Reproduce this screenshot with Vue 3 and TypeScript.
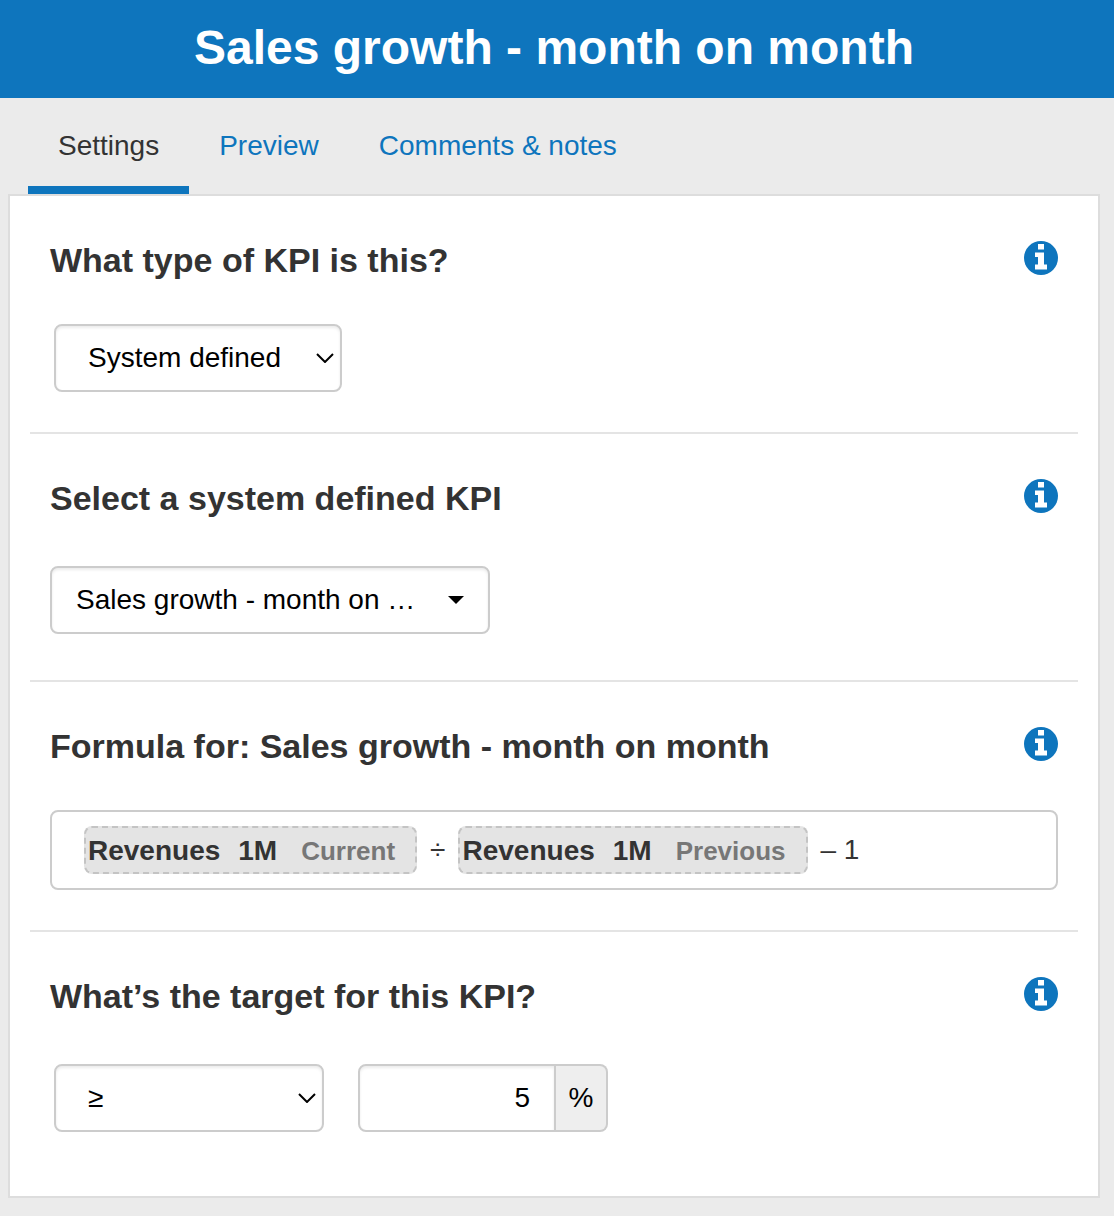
<script setup lang="ts">
import { ref } from 'vue'

interface Tab {
  id: string
  label: string
}

interface Term {
  name: string
  period: string
  offset: string
}

const kpiName = 'Sales growth - month on month'

const tabs: Tab[] = [
  { id: 'settings', label: 'Settings' },
  { id: 'preview', label: 'Preview' },
  { id: 'comments', label: 'Comments & notes' },
]
const activeTab = ref('settings')

const kpiType = ref('system')
const systemKpi = ref(kpiName)
const comparison = ref('gte')
const target = ref('5')

const current: Term = { name: 'Revenues', period: '1M', offset: 'Current' }
const previous: Term = { name: 'Revenues', period: '1M', offset: 'Previous' }

// Circled "i" glyph shared by every section's help button
const infoGlyph = 'M14 3h6v5.5h-6zM11 11.5h9v12h3v5H11v-5h3v-7.500h-3z'
</script>

<template>
  <div class="page">
    <header class="title-bar">
      <h1>{{ kpiName }}</h1>
    </header>

    <nav class="tabs">
      <a
        v-for="tab in tabs"
        :key="tab.id"
        :href="'#' + tab.id"
        class="tab"
        :class="{ active: tab.id === activeTab }"
        @click.prevent="activeTab = tab.id"
      >{{ tab.label }}</a>
    </nav>

    <main class="panel">
      <section class="section">
        <div class="section-head">
          <h2><label for="kpi-type">What type of KPI is this?</label></h2>
          <button class="info" type="button" aria-label="About KPI types">
            <svg viewBox="0 0 34 34" aria-hidden="true">
              <circle cx="17" cy="17" r="17" />
              <path :d="infoGlyph" />
            </svg>
          </button>
        </div>
        <div class="controls inset">
          <div class="select type-select">
            <select id="kpi-type" v-model="kpiType">
              <option value="system">System defined</option>
            </select>
            <svg class="chevron" viewBox="0 0 18 10" aria-hidden="true"><path d="M1 1l8 8 8-8" /></svg>
          </div>
        </div>
      </section>

      <section class="section roomy">
        <div class="section-head">
          <h2><label for="system-kpi">Select a system defined KPI</label></h2>
          <button class="info" type="button" aria-label="About system defined KPIs">
            <svg viewBox="0 0 34 34" aria-hidden="true">
              <circle cx="17" cy="17" r="17" />
              <path :d="infoGlyph" />
            </svg>
          </button>
        </div>
        <div class="controls">
          <div class="select kpi-select">
            <select id="system-kpi" v-model="systemKpi">
              <option :value="kpiName">{{ kpiName }}</option>
            </select>
            <svg class="caret" viewBox="0 0 16 8" aria-hidden="true"><path d="M0 0h16L8 8z" /></svg>
          </div>
        </div>
      </section>

      <section class="section">
        <div class="section-head">
          <h2>Formula for: {{ kpiName }}</h2>
          <button class="info" type="button" aria-label="About the formula">
            <svg viewBox="0 0 34 34" aria-hidden="true">
              <circle cx="17" cy="17" r="17" />
              <path :d="infoGlyph" />
            </svg>
          </button>
        </div>
        <div class="formula">
          <span class="term">
            <span>{{ current.name }}</span>
            <span class="period">{{ current.period }}</span>
            <span class="offset">{{ current.offset }}</span>
          </span>
          <span class="operator">÷</span>
          <span class="term">
            <span>{{ previous.name }}</span>
            <span class="period">{{ previous.period }}</span>
            <span class="offset">{{ previous.offset }}</span>
          </span>
          <span class="operator">– 1</span>
        </div>
      </section>

      <section class="section roomy">
        <div class="section-head">
          <h2><label for="target">What’s the target for this KPI?</label></h2>
          <button class="info" type="button" aria-label="About targets">
            <svg viewBox="0 0 34 34" aria-hidden="true">
              <circle cx="17" cy="17" r="17" />
              <path :d="infoGlyph" />
            </svg>
          </button>
        </div>
        <div class="controls inset">
          <div class="select compare-select">
            <select v-model="comparison" aria-label="Comparison">
              <option value="gte">≥</option>
            </select>
            <svg class="chevron" viewBox="0 0 18 10" aria-hidden="true"><path d="M1 1l8 8 8-8" /></svg>
          </div>
          <div class="amount">
            <input id="target" v-model="target" type="text" inputmode="decimal" />
            <span class="unit">%</span>
          </div>
        </div>
      </section>
    </main>
  </div>
</template>

<style>
body {
  background: #ebebeb;
}
</style>

<style scoped>
.page,
.page * {
  box-sizing: border-box;
}

.page {
  padding-bottom: 18px;
  background: #ebebeb;
  color: #333;
  font-family: "Helvetica Neue", "Liberation Sans", Arial, sans-serif;
  font-size: 28px;
  line-height: 40px;
}

.title-bar {
  padding: 18px 14px 20px 8px;
  background: #0e75bd;
  color: #fff;
  text-align: center;
}

h1 {
  margin: 0;
  font-size: 48px;
  line-height: 60px;
}

.tabs {
  display: flex;
  padding: 0 28px;
}

.tab {
  padding: 28px 30px 20px;
  border-bottom: 8px solid transparent;
  color: #0e75bd;
  text-decoration: none;
}

.tab.active {
  border-bottom-color: #0e75bd;
  color: #333;
}

.panel {
  margin: 0 14px 0 8px;
  padding: 0 20px;
  border: 2px solid #ddd;
  background: #fff;
}

.section {
  padding: 44px 20px 40px;
  border-bottom: 2px solid #e4e4e4;
}

.section.roomy {
  padding-bottom: 46px;
}

.section:last-child {
  padding-bottom: 64px;
  border-bottom: 0;
}

.section-head {
  display: flex;
  justify-content: space-between;
  margin-bottom: 44px;
}

.roomy .section-head {
  margin-bottom: 48px;
}

h2 {
  margin: 0;
  font-size: 34px;
  line-height: 40px;
}

.info {
  flex: none;
  width: 34px;
  height: 34px;
  margin-top: 1px;
  padding: 0;
  border: 0;
  background: none;
  cursor: pointer;
}

.info svg {
  display: block;
}

.info circle {
  fill: #0e75bd;
}

.info path {
  fill: #fff;
}

.controls {
  display: flex;
  gap: 34px;
}

.controls.inset {
  padding-left: 4px;
}

.select {
  display: grid;
  align-items: center;
}

.select > * {
  grid-area: 1 / 1;
}

select,
input {
  width: 100%;
  min-width: 0;
  height: 68px;
  margin: 0;
  border: 2px solid #ccc;
  border-radius: 8px;
  background: #fff;
  box-shadow: inset 0 2px 3px rgba(0, 0, 0, 0.08);
  color: #000;
  font: inherit;
}

select {
  appearance: none;
  padding: 0 32px;
  text-overflow: ellipsis;
}

.type-select {
  width: 288px;
}

.kpi-select {
  width: 440px;
}

.kpi-select select {
  padding: 0 66px 0 24px;
}

.compare-select {
  width: 270px;
}

.chevron,
.caret {
  justify-self: end;
  pointer-events: none;
}

.chevron {
  width: 18px;
  height: 10px;
  margin-right: 8px;
  fill: none;
  stroke: #000;
  stroke-width: 2;
}

.caret {
  width: 16px;
  height: 8px;
  margin-right: 26px;
}

.formula {
  display: flex;
  align-items: center;
  gap: 13px;
  min-height: 80px;
  padding: 0 32px;
  border: 2px solid #ccc;
  border-radius: 8px;
}

.term {
  display: flex;
  align-items: center;
  height: 48px;
  padding: 2px 20px 0 2px;
  border: 2px dashed #c4c4c4;
  border-radius: 8px;
  background: #e4e4e4;
  font-weight: bold;
}

.period {
  margin: 0 24px 0 18px;
}

.offset {
  color: #777;
  font-size: 26px;
}

.amount {
  display: flex;
  width: 250px;
}

.amount input {
  padding: 0 24px;
  border-radius: 8px 0 0 8px;
  text-align: right;
}

.unit {
  display: flex;
  flex: none;
  align-items: center;
  justify-content: center;
  width: 52px;
  border: 2px solid #ccc;
  border-left: 0;
  border-radius: 0 8px 8px 0;
  background: #eee;
  color: #000;
}
</style>
